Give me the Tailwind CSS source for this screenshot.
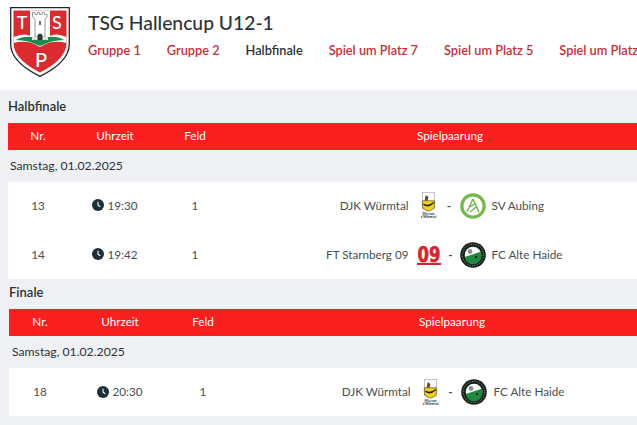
<!DOCTYPE html>
<html lang="de">
<head>
  <meta charset="UTF-8">
  <title>TSG Hallencup U12-1</title>
  <script src="https://cdn.jsdelivr.net/npm/@tailwindcss/browser@4"></script>
</head>
<body class="h-[425px] w-[637px] overflow-hidden bg-[#eff0f3] font-['Lato',sans-serif] text-[#2b3338]">

  <!-- shared logos -->
  <svg class="hidden">
    <symbol id="wuermtal" viewBox="0 0 20 28">
      <rect x="3.500" y="0.500" width="13" height="17" fill="#fff" stroke="#999" stroke-width="0.600"/>
      <path d="M3.500 9H16.500V14Q16.500 18 10 20Q3.500 18 3.500 14Z" fill="#f4d20f" stroke="#333" stroke-width="0.600"/>
      <path d="M7 3L10 5L9 9H6Z" fill="#6b4a2b"/>
      <path d="M4.500 12Q10 15 15.500 10L15.500 12Q10 17 4.500 13.500Z" fill="#222"/>
      <text x="10" y="23.500" text-anchor="middle" font-family="Lato" font-size="3.600" font-weight="700" fill="#222">Mia san</text>
      <text x="10" y="27.500" text-anchor="middle" font-family="Lato" font-size="3.600" font-weight="700" fill="#222">s'Würmtal</text>
    </symbol>
    <symbol id="aubing" viewBox="0 0 26 26">
      <circle cx="13" cy="13" r="11.200" fill="#fff" stroke="#72b84f" stroke-width="3.200"/>
      <path d="M13 6L7 19M13 6L19 19M10 14L16 10M10 19L16 14" fill="none" stroke="#72b84f" stroke-width="1.500"/>
    </symbol>
    <symbol id="altehaide" viewBox="0 0 26 26">
      <circle cx="13" cy="13" r="12.800" fill="#15201b"/>
      <circle cx="13" cy="13" r="10.700" fill="none" stroke="#cfd4d1" stroke-width="0.700" stroke-dasharray="1 1.400"/>
      <circle cx="13" cy="13" r="8.300" fill="#fff"/>
      <path d="M4.800 15L21.300 9.500V13A8.300 8.300 0 0 1 5 16Z" fill="#1f8a3f"/>
      <circle cx="10" cy="9.500" r="2.400" fill="#8b9095"/>
      <circle cx="16" cy="15" r="1.200" fill="#12351f"/>
    </symbol>
    <symbol id="clock" viewBox="0 0 12 12">
      <circle cx="6" cy="6" r="6" fill="#1f2d36"/>
      <path d="M6 2.800V6.200L8.300 7.800" fill="none" stroke="#fff" stroke-width="1.100"/>
    </symbol>
  </svg>

  <!-- Header -->
  <header class="flex h-[90px] bg-white pl-[10px] pt-[7px]">
    <svg class="h-[70px] w-[60px] shrink-0" viewBox="0 0 60 70">
      <path d="M0.700 0.700H59.300V37Q59.300 55 30 69.300Q0.700 55 0.700 37Z" fill="#fff" stroke="#23262a" stroke-width="1.300"/>
      <path d="M3.500 3.500H56.500V36Q56.500 52 30 65.500Q3.500 52 3.500 36Z" fill="#d92b30"/>
      <path d="M20 3.500H40V30H20Z" fill="#fff"/>
      <path d="M3.500 30Q16 25 22 30H38Q45 25 56.500 30V36Q42 32 30 40Q18 32 3.500 36Z" fill="#fff"/>
      <path d="M6 33Q16 27 30 32Q44 27 54 33Q42 33 30 39Q18 33 6 33Z" fill="#1c8a4c"/>
      <path d="M22.500 10V5.500H25V7.500H27.500V5.500H29.500V7.500H32V5.500H34.500V7.500H37V10L35 12V30H25V12Z" fill="#fff" stroke="#7d8286" stroke-width="0.800"/>
      <path d="M22 30H38V33H22Z" fill="#dfe2e2"/>
      <path d="M27.500 33V28Q30 25 32.500 28V33Z" fill="#33373a"/>
      <rect x="29" y="14" width="2" height="4" fill="#6c7175"/>
      <text x="12" y="22" text-anchor="middle" font-family="Lato" font-size="18" font-weight="500" fill="#fff">T</text>
      <text x="47" y="22" text-anchor="middle" font-family="Lato" font-size="18" font-weight="500" fill="#fff">S</text>
      <text x="31" y="60" text-anchor="middle" font-family="Lato" font-size="20" font-weight="500" fill="#fff">P</text>
    </svg>
    <div class="ml-[18px] min-w-0">
      <h1 class="mt-[4px] text-[19.300px] leading-[24px] font-medium">TSG Hallencup U12-1</h1>
      <nav class="mt-[5px] flex gap-[26px] text-[12.750px] leading-[20px] font-semibold whitespace-nowrap text-[#c5303c]">
        <span>Gruppe 1</span>
        <span>Gruppe 2</span>
        <span class="text-[#2b3338]">Halbfinale</span>
        <span>Spiel um Platz 7</span>
        <span>Spiel um Platz 5</span>
        <span>Spiel um Platz 3</span>
      </nav>
    </div>
  </header>

  <!-- Halbfinale -->
  <section class="pl-[8px] text-[11.700px]">
    <h2 class="pt-[8px] text-[13px] leading-[17px] font-semibold">Halbfinale</h2>
    <div class="mt-[8px] grid h-[27px] w-[664px] grid-cols-[60px_94px_66px_444px] items-center bg-[#fb2020] pb-[1px] text-center text-white">
      <div>Nr.</div><div>Uhrzeit</div><div>Feld</div><div>Spielpaarung</div>
    </div>
    <div class="flex h-[32px] items-center pl-[2px] text-[12.200px]">Samstag, 01.02.2025</div>
    <div class="w-[664px] bg-white text-[#484f54]">
      <div class="grid h-[49px] grid-cols-[60px_94px_66px_444px] items-center pb-[2px] text-center">
        <div>13</div>
        <div class="flex items-center justify-center gap-[3px]">
          <svg class="size-[12px]"><use href="#clock"/></svg>19:30
        </div>
        <div>1</div>
        <div class="grid grid-cols-[1fr_83px_1fr] items-center">
          <div class="text-right">DJK Würmtal</div>
          <div class="flex items-center justify-between pl-[10px] pr-[5px]">
            <svg class="h-[27px] w-[19px]"><use href="#wuermtal"/></svg>
            <span class="font-bold">-</span>
            <svg class="size-[26px]"><use href="#aubing"/></svg>
          </div>
          <div class="text-left">SV Aubing</div>
        </div>
      </div>
      <div class="grid h-[48px] grid-cols-[60px_94px_66px_444px] items-center pb-[1px] text-center">
        <div>14</div>
        <div class="flex items-center justify-center gap-[3px]">
          <svg class="size-[12px]"><use href="#clock"/></svg>19:42
        </div>
        <div>1</div>
        <div class="grid grid-cols-[1fr_83px_1fr] items-center">
          <div class="text-right">FT Starnberg 09</div>
          <div class="flex items-center justify-between pl-[8px] pr-[5px]">
            <svg class="h-[20px] w-[24px]" viewBox="0 0 24 20">
              <text x="0.500" y="16.700" textLength="23" lengthAdjust="spacingAndGlyphs" font-family="DejaVu Sans" font-size="22" font-weight="700" fill="#d3262f" stroke="#d3262f" stroke-width="0.700">09</text>
              <rect x="0" y="17.800" width="24" height="2.200" fill="#d3262f"/>
            </svg>
            <span class="font-bold">-</span>
            <svg class="size-[26px]"><use href="#altehaide"/></svg>
          </div>
          <div class="text-left">FC Alte Haide</div>
        </div>
      </div>
    </div>
  </section>

  <!-- Finale -->
  <section class="pl-[9px] text-[11.700px]">
    <h2 class="pt-[5px] text-[13px] leading-[17px] font-semibold">Finale</h2>
    <div class="mt-[8px] grid h-[27px] w-[664px] grid-cols-[62px_98px_68px_430px] items-center bg-[#fb2020] pb-[1px] text-center text-white">
      <div>Nr.</div><div>Uhrzeit</div><div>Feld</div><div>Spielpaarung</div>
    </div>
    <div class="flex h-[32px] items-center pl-[3px] text-[12.200px]">Samstag, 01.02.2025</div>
    <div class="w-[664px] bg-white text-[#484f54]">
      <div class="grid h-[48px] grid-cols-[62px_98px_68px_430px] items-center text-center">
        <div>18</div>
        <div class="flex items-center justify-center gap-[3px]">
          <svg class="size-[12px]"><use href="#clock"/></svg>20:30
        </div>
        <div>1</div>
        <div class="grid grid-cols-[1fr_83px_1fr] items-center">
          <div class="text-right">DJK Würmtal</div>
          <div class="flex items-center justify-between pl-[10px] pr-[6px]">
            <svg class="h-[27px] w-[19px]"><use href="#wuermtal"/></svg>
            <span class="font-bold">-</span>
            <svg class="size-[26px]"><use href="#altehaide"/></svg>
          </div>
          <div class="text-left">FC Alte Haide</div>
        </div>
      </div>
    </div>
  </section>
</body>
</html>
